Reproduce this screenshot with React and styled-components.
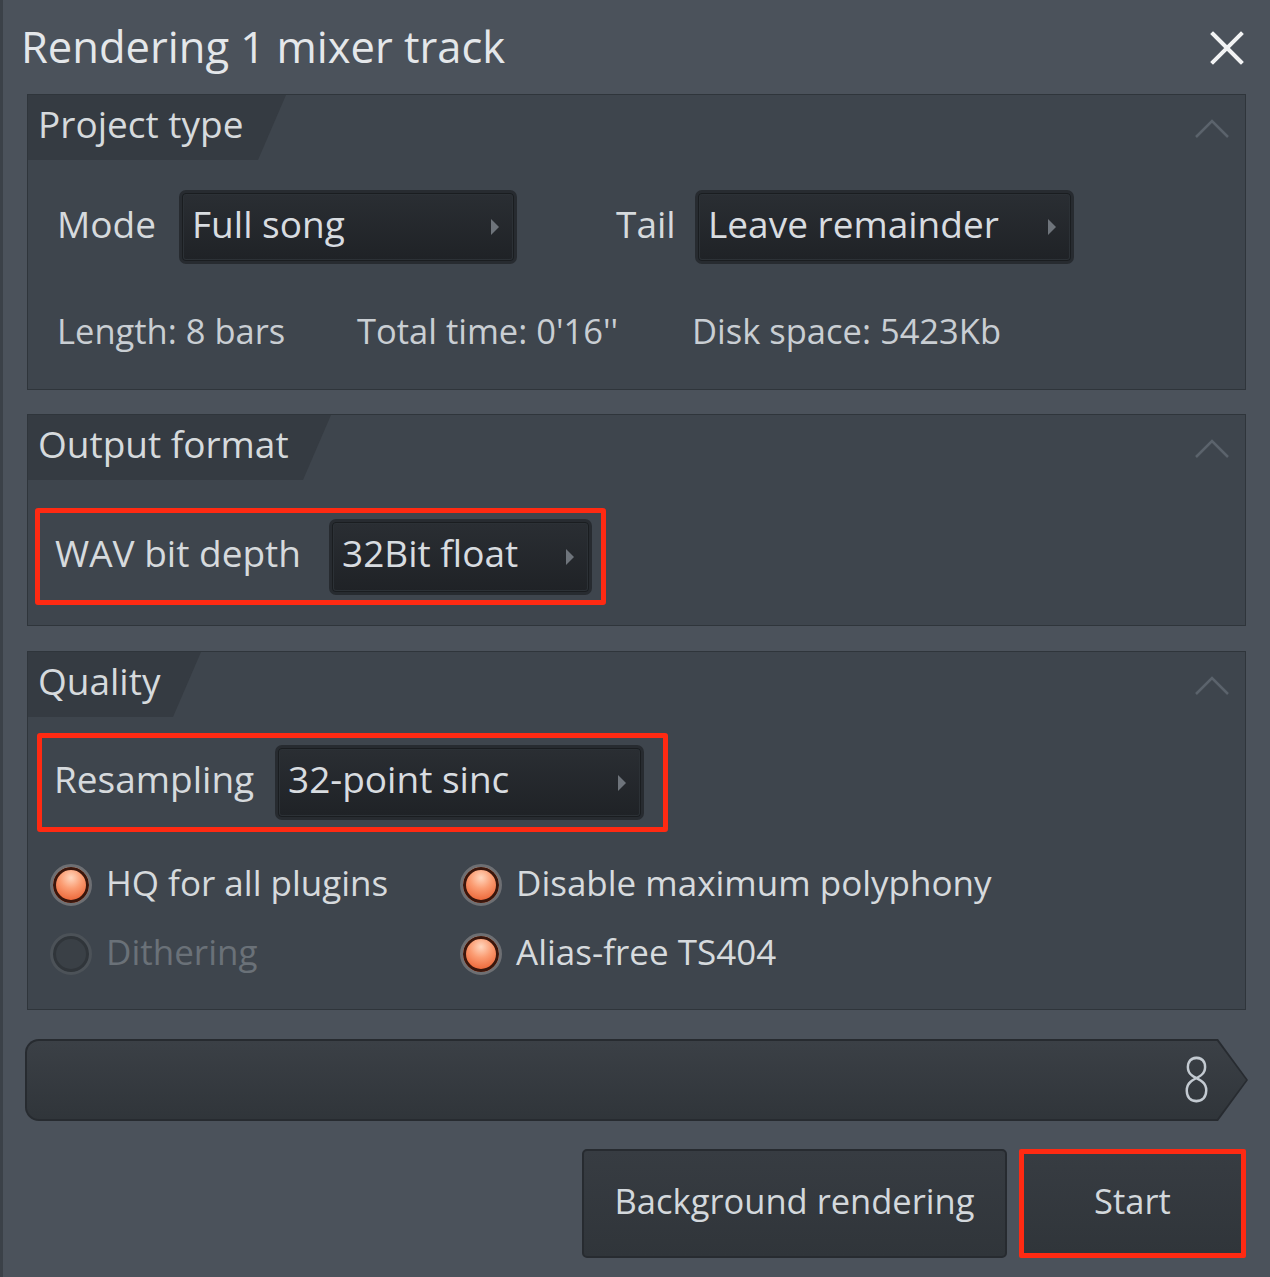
import React from 'react';
import styled, { createGlobalStyle } from 'styled-components';

const GlobalStyle = createGlobalStyle`
  html, body {
    margin: 0;
    padding: 0;
    background: #4b525b;
  }
  body {
    font-family: "Open Sans", "Noto Sans", "Liberation Sans", sans-serif;
    color: #d3d8dc;
  }
`;

const Dialog = styled.div`
  box-sizing: border-box;
  width: 1270px;
  height: 1277px;
  background: #4b525b;
  border-left: 3px solid #3b4148;
  display: flex;
  flex-direction: column;
`;

const TitleBar = styled.div`
  height: 94px;
  display: flex;
  align-items: center;
  justify-content: space-between;
  padding: 0 26px 0 18px;
`;

const Title = styled.h1`
  margin: 0;
  font-size: 43.5px;
  font-weight: 400;
  color: #e4e7ea;
  padding-bottom: 2px;
`;

const Panel = styled.section`
  margin: ${(p) => p.$top}px 24px 0 24px;
  background: #3e454d;
  border: 1px solid #2f353b;
  display: flex;
  flex-direction: column;
  padding-bottom: ${(p) => p.$bottom}px;
`;

const PanelHead = styled.div`
  height: 65px;
  display: flex;
  justify-content: space-between;
`;

const Tab = styled.div`
  width: ${(p) => p.$w}px;
  height: 65px;
  background: #353b42;
  clip-path: polygon(0 0, 100% 0, calc(100% - 28px) 100%, 0 100%);
  box-sizing: border-box;
  padding: 0 0 8px 10px;
  display: flex;
  align-items: center;
  font-size: 37px;
  color: #d6dadd;
`;

const Chevron = styled.svg`
  margin: 22px 15px 0 0;
`;

const FieldRow = styled.div`
  display: flex;
  align-items: center;
  margin: 30px 0 0 29px;
`;

const Label = styled.span`
  width: ${(p) => (p.$w ? `${p.$w}px` : 'auto')};
  margin-left: ${(p) => p.$ml || 0}px;
  padding-bottom: 8px;
  font-size: 37px;
  color: #d6dadd;
  flex-shrink: 0;
`;

const Dropdown = styled.div`
  box-sizing: border-box;
  width: ${(p) => p.$w}px;
  height: ${(p) => p.$h || 74}px;
  border: 3px solid #272b30;
  border-radius: 7px;
  box-shadow: inset 0 0 0 1px #1a1d20, inset 0 0 0 2px #2c3136;
  background: linear-gradient(#2a2e33, #1f2226);
  display: flex;
  align-items: center;
  justify-content: space-between;
  padding: 0 15px 0 10px;
  font-size: 37px;
  color: #d8dce0;
  flex-shrink: 0;
`;

const Value = styled.span`
  padding-bottom: 8px;
`;

const Arrow = styled.span`
  width: 0;
  height: 0;
  border-left: 8px solid #6e747b;
  border-top: 8px solid transparent;
  border-bottom: 8px solid transparent;
`;

const InfoRow = styled.div`
  display: grid;
  grid-template-columns: 300px 335px auto;
  margin: 47px 0 0 29px;
  font-size: 34.5px;
  line-height: 40px;
  color: #c9ced3;
`;

const Highlight = styled.div`
  box-sizing: border-box;
  width: ${(p) => p.$w}px;
  height: ${(p) => p.$h}px;
  margin: ${(p) => p.$top}px 0 0 ${(p) => p.$left}px;
  border: 5px solid #ff2a12;
  border-radius: 3px;
  display: flex;
  align-items: center;
  justify-content: space-between;
  padding: 0 ${(p) => p.$pr}px 0 ${(p) => p.$pl}px;
`;

const Options = styled.div`
  display: grid;
  grid-template-columns: 410px auto;
  row-gap: 19px;
  margin: 28px 0 0 22px;
`;

const Option = styled.label`
  display: flex;
  align-items: center;
  height: 50px;
  gap: 14px;
  font-size: 35px;
  color: ${(p) => (p.$disabled ? '#6a7178' : '#d6dadd')};
`;

const OptionText = styled.span`
  padding-bottom: 6px;
`;

const Radio = styled.span`
  box-sizing: border-box;
  width: 42px;
  height: 42px;
  border-radius: 50%;
  border: 3px solid ${(p) => (p.$on ? '#6d6f73' : '#4c5258')};
  box-shadow: inset 0 0 0 3px ${(p) => (p.$on ? '#3a160c' : '#30353a')};
  background: ${(p) => (p.$on
    ? 'radial-gradient(circle at 50% 30%, #ffd6be 0%, #fb9c72 35%, #ee6a3c 72%, #c5441e 100%)'
    : '#3a4046')};
  flex-shrink: 0;
`;

const BarOuter = styled.div`
  margin: 29px 22px 0 22px;
  height: 82px;
  padding: 2px;
  box-sizing: border-box;
  background: #272b30;
  border-radius: 14px 0 0 14px;
  clip-path: polygon(0 0, calc(100% - 30px) 0, 100% 50%, calc(100% - 30px) 100%, 0 100%);
`;

const BarInner = styled.div`
  height: 100%;
  border-radius: 12px 0 0 12px;
  background: linear-gradient(#3b4046, #30353a);
  clip-path: polygon(0 0, calc(100% - 29px) 0, 100% 50%, calc(100% - 29px) 100%, 0 100%);
  display: flex;
  align-items: center;
  justify-content: flex-end;
  padding: 0 36px 4px 0;
  box-sizing: border-box;
`;

const Counter = styled.span`
  display: inline-block;
  font-size: 62px;
  font-weight: 300;
  color: #c3cad1;
  transform: scaleX(0.78);
  transform-origin: right center;
`;

const Buttons = styled.div`
  display: flex;
  justify-content: flex-end;
  gap: 12px;
  margin: 28px 24px 0 0;
`;

const Button = styled.button`
  box-sizing: border-box;
  width: ${(p) => p.$w}px;
  height: 109px;
  background: linear-gradient(#373c42, #30353a);
  border: ${(p) => (p.$highlight ? '5px solid #ff2a12' : '2px solid #272b30')};
  border-radius: ${(p) => (p.$highlight ? 2 : 5)}px;
  font-family: inherit;
  font-size: 34.5px;
  color: #d3d8dc;
  padding: 0 0 6px 0;
`;

const CloseIcon = () => (
  <svg width="34" height="36" viewBox="0 0 34 36">
    <path d="M3 5 L31 33 M31 5 L3 33" stroke="#f2f3f4" strokeWidth="4" strokeLinecap="square" />
  </svg>
);

const Collapse = () => (
  <Chevron width="36" height="22" viewBox="0 0 36 22">
    <path d="M2 20 L18 4 L34 20" stroke="#5b636c" strokeWidth="2.5" fill="none" />
  </Chevron>
);

const Header = ({ title, width }) => (
  <PanelHead>
    <Tab $w={width}>{title}</Tab>
    <Collapse />
  </PanelHead>
);

const Select = ({ value, width, height }) => (
  <Dropdown $w={width} $h={height}>
    <Value>{value}</Value>
    <Arrow />
  </Dropdown>
);

const App = () => (
  <Dialog>
    <GlobalStyle />
    <TitleBar>
      <Title>Rendering 1 mixer track</Title>
      <CloseIcon />
    </TitleBar>

    <Panel $top={0} $bottom={38}>
      <Header title="Project type" width={258} />
      <FieldRow>
        <Label $w={122}>Mode</Label>
        <Select value="Full song" width={338} />
        <Label $w={79} $ml={99}>Tail</Label>
        <Select value="Leave remainder" width={379} />
      </FieldRow>
      <InfoRow>
        <span>Length: 8 bars</span>
        <span>Total time: 0'16''</span>
        <span>Disk space: 5423Kb</span>
      </InfoRow>
    </Panel>

    <Panel $top={24} $bottom={20}>
      <Header title="Output format" width={303} />
      <Highlight $w={571} $h={97} $top={28} $left={7} $pl={15} $pr={9}>
        <Label>WAV bit depth</Label>
        <Select value="32Bit float" width={263} height={76} />
      </Highlight>
    </Panel>

    <Panel $top={25} $bottom={30}>
      <Header title="Quality" width={173} />
      <Highlight $w={631} $h={99} $top={16} $left={9} $pl={12} $pr={19}>
        <Label>Resampling</Label>
        <Select value="32-point sinc" width={369} height={75} />
      </Highlight>
      <Options>
        <Option><Radio $on /><OptionText>HQ for all plugins</OptionText></Option>
        <Option><Radio $on /><OptionText>Disable maximum polyphony</OptionText></Option>
        <Option $disabled><Radio /><OptionText>Dithering</OptionText></Option>
        <Option><Radio $on /><OptionText>Alias-free TS404</OptionText></Option>
      </Options>
    </Panel>

    <BarOuter>
      <BarInner><Counter>8</Counter></BarInner>
    </BarOuter>

    <Buttons>
      <Button $w={425}>Background rendering</Button>
      <Button $w={227} $highlight>Start</Button>
    </Buttons>
  </Dialog>
);

export default App;
